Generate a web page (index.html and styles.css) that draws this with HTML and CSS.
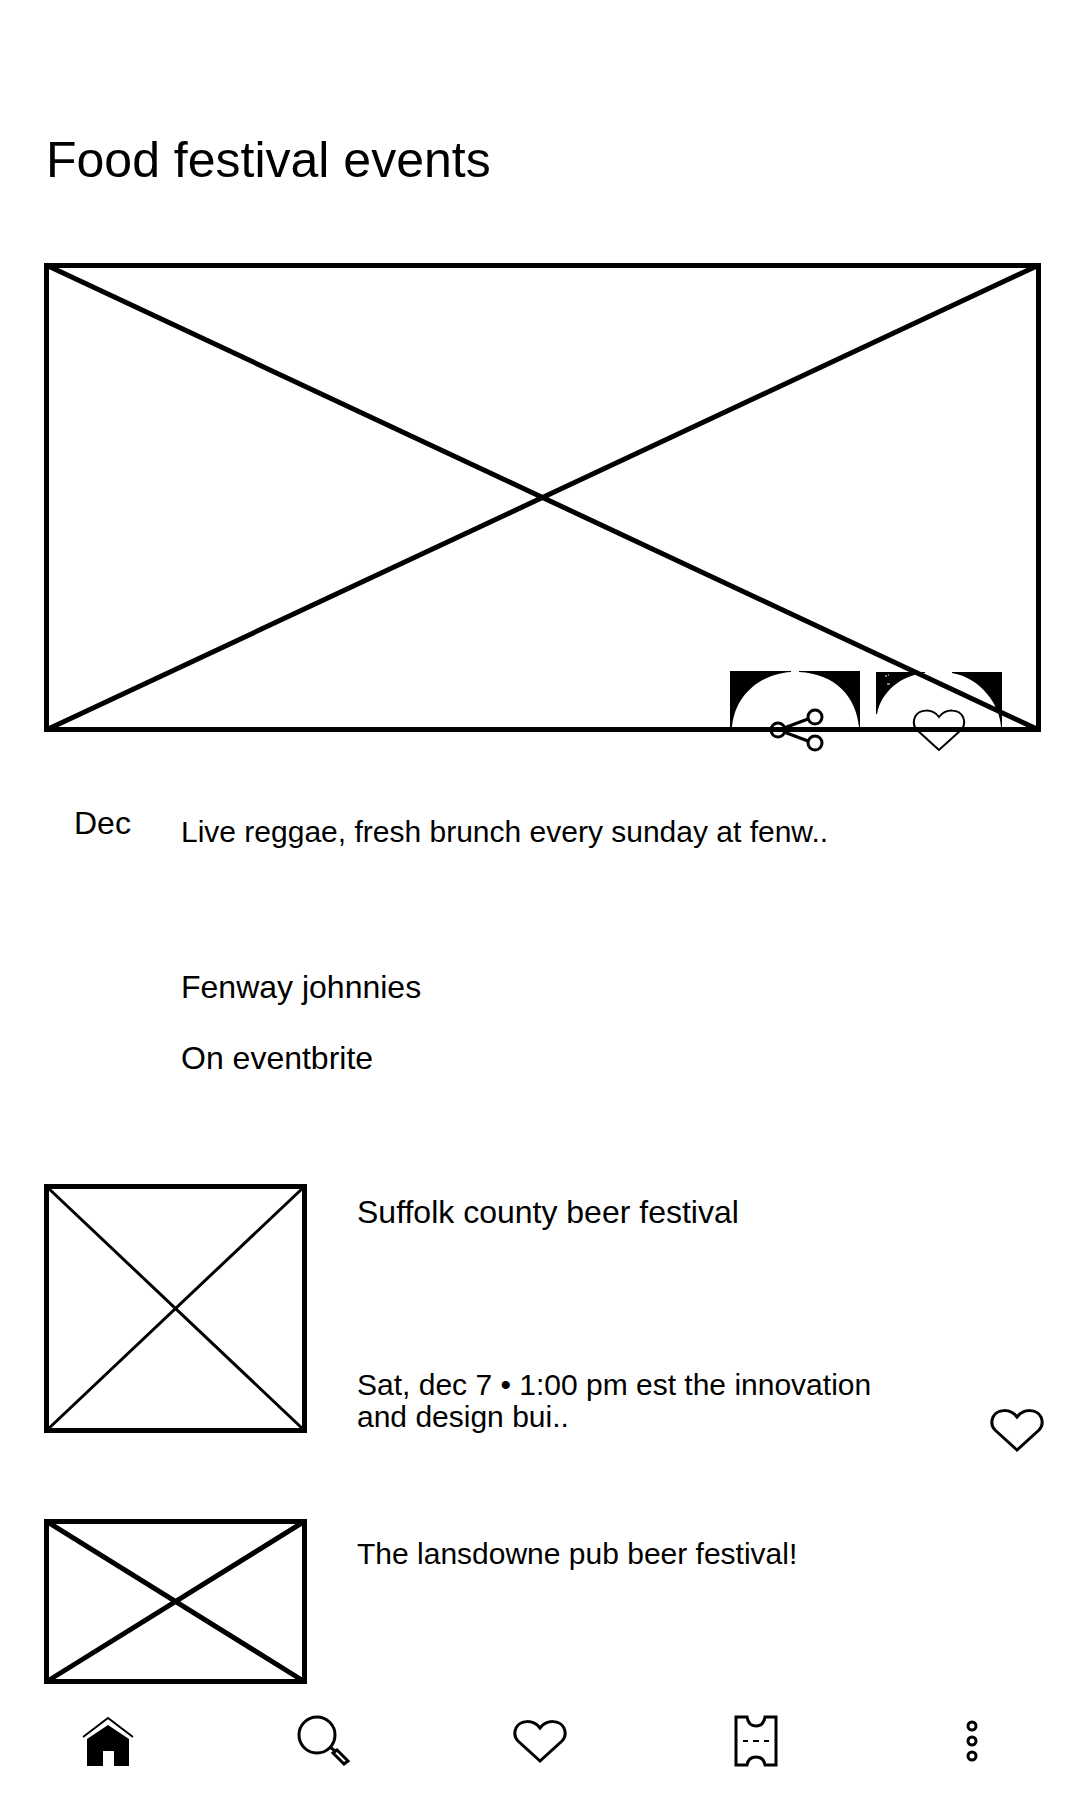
FILE: index.html
```html
<!DOCTYPE html>
<html lang="en">
<head>
<meta charset="utf-8">
<meta name="viewport" content="width=device-width, initial-scale=1">
<title>Food festival events</title>
<link rel="stylesheet" href="styles.css">
</head>
<body>
<svg class="defs" aria-hidden="true">
  <symbol id="heart" viewBox="0 0 54 44">
    <path d="M27 42 L5 22 C1 18 1 14 3 9 C7 1 20 0 27 9 C34 0 47 1 51 9 C53 14 53 18 49 22 Z"/>
  </symbol>
</svg>
<main class="page">
  <h1 class="page-title">Food festival events</h1>

  <article class="featured">
    <div class="placeholder hero">
      <svg class="cross" viewBox="0 0 100 100" preserveAspectRatio="none" aria-hidden="true"><path d="M0 0 100 100M100 0 0 100"/></svg>
      <div class="hero-actions">
        <button class="icon-button" type="button" aria-label="Share">
          <svg class="hero-icon" width="130" height="84" viewBox="0 0 130 84" aria-hidden="true">
            <path class="solid" d="M0 0H61V1C30 3 5 24 2 56H0ZM69 0H130V56H129C126 26 106 3 69 1Z"/>
            <g class="thick"><circle cx="48" cy="59" r="7"/><circle cx="85" cy="46" r="7"/><circle cx="85" cy="72" r="7"/><path d="M54 57 78 48M54 61 78 70"/></g>
          </svg>
        </button>
        <button class="icon-button" type="button" aria-label="Add to favourites">
          <svg class="hero-icon" width="126" height="84" viewBox="0 0 126 84" aria-hidden="true">
            <path class="solid" d="M0 1H49V2C25 4 5 21 1 43H0ZM76 1H126V56H125C124 34 105 7 76 2Z"/>
            <path class="speck" d="M9 5h2M12 4h1M11 13h3"/>
            <use href="#heart" x="36" y="37" width="54" height="44"/>
          </svg>
        </button>
      </div>
    </div>
    <div class="featured-info">
      <p class="month">Dec</p>
      <div class="featured-text">
        <h2 class="headline">Live reggae, fresh brunch every sunday at fenw..</h2>
        <p class="venue">Fenway johnnies</p>
        <p class="source">On eventbrite</p>
      </div>
    </div>
  </article>

  <section class="events">
    <article class="event">
      <div class="placeholder thumb thumb-tall">
        <svg class="cross cross-thin" viewBox="0 0 100 100" preserveAspectRatio="none" aria-hidden="true"><path d="M0 0 100 100M100 0 0 100"/></svg>
      </div>
      <div class="event-text">
        <h2 class="event-title">Suffolk county beer festival</h2>
        <p class="event-detail">Sat, dec 7 • 1:00 pm est the innovation and design bui..</p>
      </div>
      <button class="icon-button favourite" type="button" aria-label="Add to favourites">
        <svg class="icon" width="54" height="44" aria-hidden="true"><use href="#heart"/></svg>
      </button>
    </article>
    <article class="event">
      <div class="placeholder thumb thumb-short">
        <svg class="cross" viewBox="0 0 100 100" preserveAspectRatio="none" aria-hidden="true"><path d="M0 0 100 100M100 0 0 100"/></svg>
      </div>
      <div class="event-text">
        <h2 class="headline">The lansdowne pub beer festival!</h2>
      </div>
    </article>
  </section>
</main>

<nav class="tabs" aria-label="Main">
  <a class="tab" href="#home" aria-label="Home">
    <svg class="icon" width="54" height="52" viewBox="0 0 54 52" aria-hidden="true"><path class="fine" d="M2 22 27 3 52 22"/><path class="solid" d="M6 24 27 10 48 24V51H33V36H22V51H6Z"/></svg>
  </a>
  <a class="tab" href="#search" aria-label="Search">
    <svg class="icon" width="54" height="52" viewBox="0 0 54 52" aria-hidden="true"><ellipse cx="20" cy="20" rx="18" ry="18"/><path d="M33 32 38 36M36 38 40 35 51 46 47 49Z"/></svg>
  </a>
  <a class="tab" href="#favourites" aria-label="Favourites">
    <svg class="icon" width="54" height="44" aria-hidden="true"><use href="#heart"/></svg>
  </a>
  <a class="tab" href="#tickets" aria-label="Tickets">
    <svg class="icon" width="44" height="52" viewBox="0 0 44 52" aria-hidden="true"><path d="M2 2H13C14 8 17 11 22 11S30 8 31 2H42V50H31C30 44 27 42 22 42S14 44 13 50H2Z"/><path class="fine" d="M9 26h5M19 26h6M30 26h5"/></svg>
  </a>
  <a class="tab" href="#more" aria-label="More">
    <svg class="icon" width="12" height="44" viewBox="0 0 12 44" aria-hidden="true"><circle cx="6" cy="7" r="4"/><circle cx="6" cy="22" r="4"/><circle cx="6" cy="37" r="4"/></svg>
  </a>
</nav>
</body>
</html>
```
FILE: styles.css
```css
* {
  box-sizing: border-box;
}

body {
  margin: 0;
  min-height: 100vh;
  display: flex;
  flex-direction: column;
  background: #fff;
  color: #000;
  font-family: "Liberation Sans", Arial, sans-serif;
}

h1, h2, p {
  margin: 0;
  font-weight: 400;
}

.defs {
  display: none;
}

.page {
  padding: 132px 39px 0 44px;
}

.page-title {
  margin-bottom: 75px;
  padding-left: 2px;
  font-size: 50px;
  line-height: 56px;
}

/* Crossed boxes stand in for pictures */
.placeholder {
  position: relative;
  border: 5px solid #000;
}

/* The diagonals run over the border, to its corners */
.cross {
  position: absolute;
  top: -3px;
  left: -3px;
  width: calc(100% + 6px);
  height: calc(100% + 6px);
  overflow: visible;
  stroke: #000;
  stroke-width: 5px;
}

.cross path {
  vector-effect: non-scaling-stroke;
}

.cross-thin {
  stroke-width: 3px;
}

.hero {
  aspect-ratio: 997 / 469;
}

.hero-actions {
  position: absolute;
  right: 34px;
  bottom: -28px;
  display: flex;
  gap: 16px;
}

.icon-button {
  display: block;
  padding: 0;
  border: 0;
  background: none;
  color: inherit;
  cursor: pointer;
}

.icon,
.hero-icon {
  display: block;
  fill: none;
  stroke: #000;
}

.icon,
.thick {
  stroke-width: 3px;
}

.hero-icon,
.fine {
  stroke-width: 2px;
}

.solid {
  fill: #000;
  stroke: none;
}

.speck {
  stroke: #fff;
  stroke-width: 1px;
}

.featured-info {
  display: grid;
  grid-template-columns: 107px 1fr;
  padding: 71px 0 106px 30px;
}

.month,
.venue,
.source,
.event-title {
  font-size: 32px;
  line-height: 40px;
}

.featured-text {
  padding-top: 9px;
}

.headline {
  font-size: 30px;
  line-height: 40px;
}

.venue {
  margin: 115px 0 31px;
}

.events {
  display: grid;
  gap: 67px;
}

.event {
  display: flex;
  align-items: flex-start;
}

.thumb {
  flex: none;
  width: 263px;
  margin-right: 50px;
}

.thumb-tall {
  height: 249px;
}

.thumb-short {
  height: 165px;
}

.event-text {
  flex: 1;
  max-width: 540px;
  padding-top: 8px;
}

.thumb-short + .event-text {
  padding-top: 15px;
}

.event-title {
  margin-bottom: 137px;
}

.event-detail {
  font-size: 30px;
  line-height: 32px;
}

.favourite {
  margin: 224px -3px 0 auto;
}

.tabs {
  display: grid;
  grid-template-columns: repeat(5, 1fr);
  align-items: center;
  margin-top: auto;
  padding: 24px 0 33px;
}

.tab {
  display: flex;
  justify-content: center;
  color: inherit;
}
```
